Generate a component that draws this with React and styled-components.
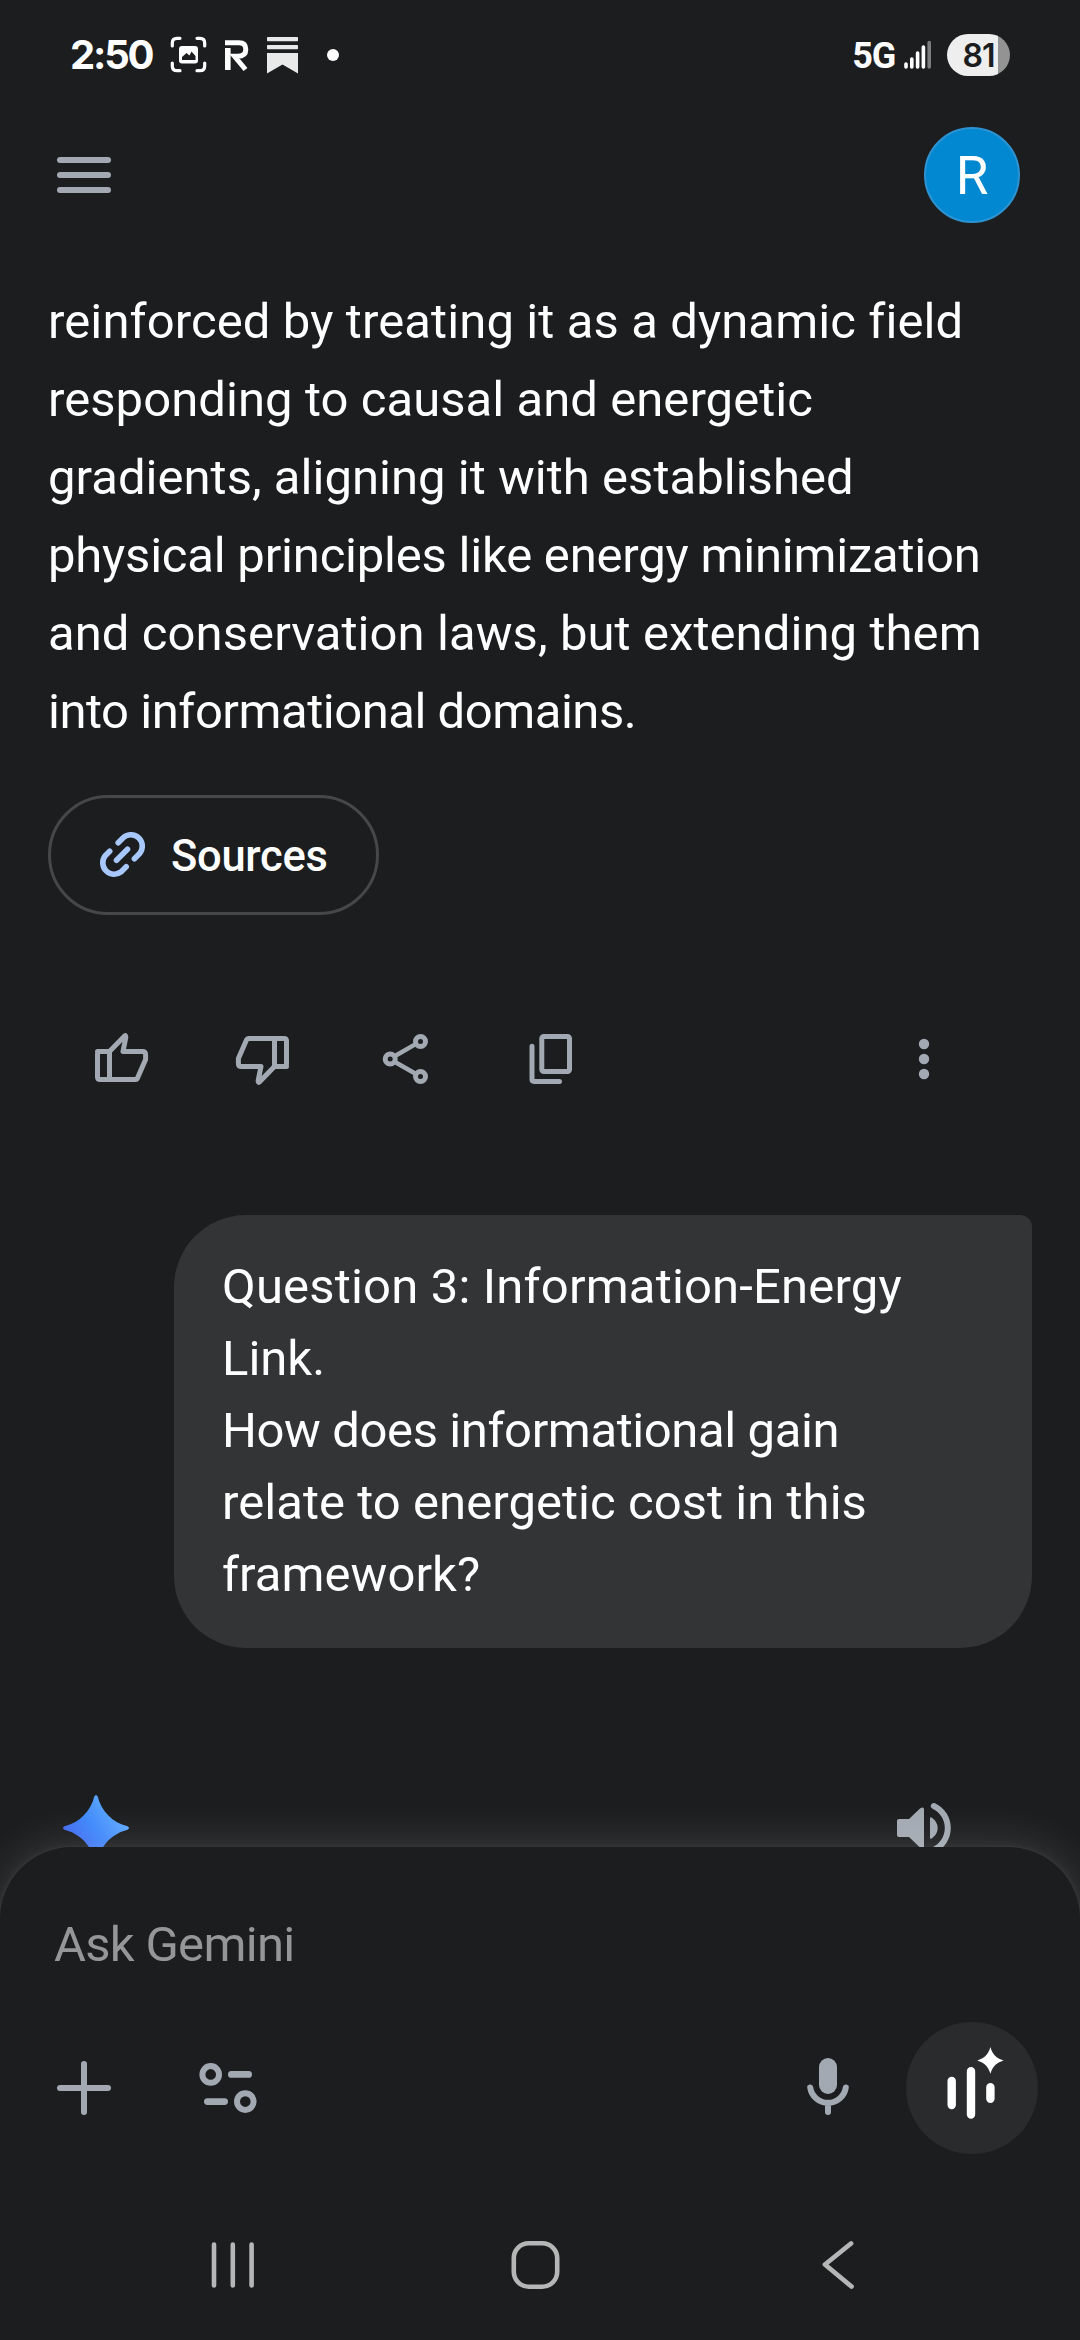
import React from 'react'
import styled, { createGlobalStyle } from 'styled-components'

const GlobalStyle = createGlobalStyle`
  * {
    box-sizing: border-box;
  }
  body {
    margin: 0;
    background: #1b1d1e;
    font-family: Roboto, "Liberation Sans", sans-serif;
  }
  svg {
    display: block;
    flex: none;
  }
`;

const Screen = styled.div`
  width: 1080px;
  height: 2340px;
  display: flex;
  flex-direction: column;
  overflow: hidden;
  background: #1b1d1e;
  color: #ffffff;
`;

const StatusBar = styled.div`
  height: 110px;
  flex: none;
  display: flex;
  justify-content: space-between;
  align-items: center;
  padding: 0 70px;
`;

const StatusGroup = styled.div`
  display: flex;
  align-items: center;
`;

const Clock = styled.span`
  width: 100px;
  font-family: Inter, Roboto, sans-serif;
  font-size: 40px;
  line-height: 48px;
  font-weight: 700;
  letter-spacing: -2.2px;
  white-space: nowrap;
`;

const Network = styled.span`
  margin-right: 9px;
  font-size: 36px;
  line-height: 44px;
  font-weight: 700;
  letter-spacing: -1.2px;
  padding-top: 2px;
`;

const Battery = styled.div`
  width: 63px;
  height: 42px;
  margin-left: 15px;
  border-radius: 21px;
  display: flex;
  align-items: center;
  justify-content: center;
  background: linear-gradient(to right, #eeeeee ${props => props.level}%, #939393 ${props => props.level}%);
  color: #1b1d1e;
  font-family: Inter, Roboto, sans-serif;
  font-size: 32px;
  font-weight: 600;
  letter-spacing: -1px;
`;

const TopBar = styled.div`
  height: 130px;
  flex: none;
  display: flex;
  justify-content: space-between;
  align-items: center;
  padding: 0 60px 0 54px;
`;

const Avatar = styled.div`
  width: 96px;
  height: 96px;
  border-radius: 50%;
  border: 2px solid #2d93d2;
  background: #0288d1;
  display: flex;
  align-items: center;
  justify-content: center;
  font-size: 53px;
  line-height: 60px;
  padding-top: 2px;
`;

const Chat = styled.div`
  height: 1607px;
  flex: none;
  display: flex;
  flex-direction: column;
  align-items: flex-start;
  padding: 43px 48px 0;
  overflow: hidden;
`;

const Paragraph = styled.p`
  margin: 0;
  flex: none;
  font-size: 49px;
  line-height: ${props => props.lh}px;
  white-space: nowrap;
`;

const Line = styled.span`
  display: block;
  letter-spacing: ${props => props.ls}px;
`;

const SourcesButton = styled.button`
  width: 331px;
  height: 120px;
  flex: none;
  margin: 44px 0 0;
  padding: 0 0 0 42px;
  display: flex;
  align-items: center;
  gap: 18px;
  border: 3px solid #474747;
  border-radius: 60px;
  background: transparent;
  color: #ffffff;
  font-family: inherit;
  font-size: 43.5px;
  font-weight: 500;
  letter-spacing: -0.3px;
`;

const SourcesLabel = styled.span`
  padding-top: 2px;
`;

const ActionRow = styled.div`
  align-self: stretch;
  display: flex;
  align-items: center;
  gap: 84px;
  margin-top: 114px;
  padding: 0 78px 0 42px;
`;

const Spacer = styled.div`
  flex: 1;
`;

const Bubble = styled.div`
  align-self: flex-end;
  width: 858px;
  height: 433px;
  flex: none;
  margin-top: 126px;
  padding: 36px 48px 0;
  border-radius: 72px 12px 72px 72px;
  background: #333436;
`;

const ReplyHeader = styled.div`
  align-self: stretch;
  display: flex;
  flex: none;
  align-items: center;
  justify-content: space-between;
  margin-top: 144px;
  padding: 0 78px 0 12px;
`;

const Composer = styled.div`
  position: relative;
  flex: 1;
  display: flex;
  flex-direction: column;
  border-radius: 72px 72px 0 0;
  background: #1b1d1e;
  box-shadow: 0 0 44px 6px rgba(255, 255, 255, 0.13), 0 0 7px rgba(255, 255, 255, 0.08);
`;

const Prompt = styled.div`
  height: 78px;
  margin: 59px 54px 0;
  color: #959697;
  font-size: 49px;
  line-height: 78px;
  letter-spacing: -0.7px;
`;

const Tools = styled.div`
  height: 132px;
  margin-top: 38px;
  padding: 0 42px 0 54px;
  display: flex;
  align-items: center;
`;

const ToolIcon = styled.div`
  margin-left: ${props => props.gap || 0}px;
`;

const LiveButton = styled.div`
  width: 132px;
  height: 132px;
  margin-left: 48px;
  border-radius: 50%;
  background: #2a2b2d;
`;

const NavBar = styled.div`
  height: 60px;
  margin-top: 81px;
  padding: 0 210px 0 203px;
  display: flex;
  align-items: center;
  justify-content: space-between;
`;

const ICON = '#a2a9b2';
const NAV = '#b6b6b6';

const Icon = ({ children, color = ICON, sw = 5, size = 60 }) => (
  <svg width={size} height={size} viewBox={`0 0 ${size} ${size}`} fill="none" stroke={color} strokeWidth={sw}
    strokeLinecap="round" strokeLinejoin="round">
    {children}
  </svg>
)

// the same outline serves thumb up and thumb down
const Thumb = ({ down }) => (
  <Icon>
    <g transform={down ? 'rotate(180 30 30)' : undefined}>
      <path d="M7.5 22.5 H19.5 L34.6 7 Q36 6 35.8 8.6 L33 22.5 H52.5 Q55.6 22.5 55.6 25.6 V30.5 L47.3 49.5 Q46.8 50.6 45.6 50.6 H10 Q7.5 50.6 7.5 48 V25 Q7.5 22.5 10 22.5 M19.5 22.5 V50.6" />
    </g>
  </Icon>
)

const StatusIcons = () => (
  <svg width="180" height="44" viewBox="0 0 180 44" fill="none" stroke="#ffffff">
    {/* screenshot frame */}
    <path d="M2.3 13 V10 Q2.3 5.3 7 5.3 H10 M27 5.3 H30 Q34.7 5.3 34.7 10 V13 M34.7 30 V33 Q34.7 37.7 30 37.7 H27 M10 37.7 H7 Q2.3 37.7 2.3 33 V30"
      strokeWidth="3.2" strokeLinecap="round" />
    <rect x="9" y="13" width="19" height="17.5" rx="3" fill="#ffffff" stroke="none" />
    <path d="M12 27 V24 L16.5 20 L19.5 22.5 L21.5 18.5 L25.5 23 V27 Z" fill="#1b1d1e" stroke="none" />
    {/* app badge */}
    <path d="M55 9.8 H69 Q75.8 9.8 75.8 16.5 Q75.8 23.3 67.5 23.3 H64.5 L75.5 36.5" strokeWidth="5" />
    <path d="M57.8 15 V37" strokeWidth="5.6" />
    {/* bookmark */}
    <g fill="#e9e9e9" stroke="none">
      <rect x="97" y="4" width="31" height="4.2" rx="0.8" />
      <rect x="97" y="12" width="31" height="4.2" rx="0.8" />
      <path d="M97 20 H128 V40.5 L112.5 31.5 L97 40.5 Z" />
    </g>
    <circle cx="163" cy="22" r="6" fill="#ffffff" stroke="none" />
  </svg>
)

const Signal = () => (
  <svg width="28" height="30" viewBox="0 0 28 30" strokeWidth="3.6" strokeLinecap="round" stroke="#ffffff">
    <path d="M2 24 V27 M7.8 19 V27 M13.6 13 V27 M19.4 7 V27" />
    <path d="M25.2 2.5 V27" stroke="#7c7d7e" />
  </svg>
)

const App = () => {
  return (
    <Screen>
      <GlobalStyle />
      <StatusBar>
        <StatusGroup>
          <Clock>2:50</Clock>
          <StatusIcons />
        </StatusGroup>
        <StatusGroup>
          <Network>5G</Network>
          <Signal />
          <Battery level={81}>81</Battery>
        </StatusGroup>
      </StatusBar>

      <TopBar>
        <Icon sw={6}>
          <path d="M6 15 H54 M6 30 H54 M6 45 H54" />
        </Icon>
        <Avatar>R</Avatar>
      </TopBar>

      <Chat>
        <Paragraph lh={78}>
          <Line ls={0.11}>reinforced by treating it as a dynamic field</Line>
          <Line ls={0.06}>responding to causal and energetic</Line>
          <Line ls={0.03}>gradients, aligning it with established</Line>
          <Line ls={-0.21}>physical principles like energy minimization</Line>
          <Line ls={0.08}>and conservation laws, but extending them</Line>
          <Line ls={-0.47}>into informational domains.</Line>
        </Paragraph>

        <SourcesButton>
          <Icon color="#a8c7fa" sw={5.6}>
            <path d="M25.5 20 L30.5 15 A11.4 11.4 0 0 1 46.7 31 L41.7 36 M34.8 26.5 L23.8 37.5 M17 28.5 L12.5 33 A11.4 11.4 0 0 0 28.5 49 L33.5 44"
              transform="translate(-0.3 -2.2)" />
          </Icon>
          <SourcesLabel>Sources</SourcesLabel>
        </SourcesButton>

        <ActionRow>
          <Thumb />
          <Thumb down />
          <Icon>
            <path d="M17 27 L38 14.8 M17 33 L38 45" strokeWidth="4.4" />
            <circle cx="12.2" cy="30" r="5" />
            <circle cx="42.5" cy="12.5" r="5" />
            <circle cx="42.5" cy="47.5" r="5" />
          </Icon>
          <Icon>
            <rect x="19.8" y="7.5" width="27.7" height="35" rx="2" />
            <path d="M10 17.2 V50.5 Q10 52.4 12 52.4 H37.5" />
          </Icon>
          <Spacer />
          <Icon>
            <g fill={ICON} stroke="none">
              <circle cx="30" cy="15" r="5.2" />
              <circle cx="30" cy="30" r="5.2" />
              <circle cx="30" cy="45" r="5.2" />
            </g>
          </Icon>
        </ActionRow>

        <Bubble>
          <Paragraph lh={72}>
            <Line ls={0.18}>Question 3: Information-Energy</Line>
            <Line ls={0}>Link.</Line>
            <Line ls={-0.4}>How does informational gain</Line>
            <Line ls={0.05}>relate to energetic cost in this</Line>
            <Line ls={0.05}>framework?</Line>
          </Paragraph>
        </Bubble>

        <ReplyHeader>
          <svg width="72" height="72" viewBox="0 0 72 72">
            <defs>
              <linearGradient id="spark" x1="0.15" y1="0.75" x2="0.75" y2="0.25">
                <stop offset="0" stopColor="#4267ee" />
                <stop offset="0.5" stopColor="#3f87fb" />
                <stop offset="1" stopColor="#5ba6ff" />
              </linearGradient>
            </defs>
            <path fill="url(#spark)"
              d="M34.3 4.5 Q36 1.5 37.7 4.5 C41.5 19.5 52.5 30.5 67.5 34.3 Q70.5 36 67.5 37.7 C52.5 41.5 41.5 52.5 37.7 67.5 Q36 70.5 34.3 67.5 C30.5 52.5 19.5 41.5 4.5 37.7 Q1.5 36 4.5 34.3 C19.5 30.5 30.5 19.5 34.3 4.5 Z" />
          </svg>
          <Icon sw={6}>
            <g fill={ICON} stroke="none">
              <path d="M5 21 H15 L26 10.5 Q30 8 30 11.5 V48.5 Q30 52 26 49.5 L15 39 H5 Q3 39 3 37 V23 Q3 21 5 21 Z" />
              <path d="M36 20.5 Q36 18.3 38 19.8 Q43.7 24 43.7 30 Q43.7 36 38 40.2 Q36 41.7 36 39.5 Z" />
            </g>
            <path d="M39.8 8 A24.3 24.3 0 0 1 39.8 52" />
          </Icon>
        </ReplyHeader>
      </Chat>

      <Composer>
        <Prompt>Ask Gemini</Prompt>
        <Tools>
          <Icon sw={6}>
            <path d="M30 6 V54 M6 30 H54" />
          </Icon>
          <ToolIcon gap={84}>
            <Icon sw={6}>
              <circle cx="12.7" cy="16.4" r="8.3" />
              <circle cx="47.3" cy="43.6" r="8.3" />
              <path d="M33.4 16.4 H50.6 M9.4 43.6 H26.6" strokeWidth="6.8" />
            </Icon>
          </ToolIcon>
          <Spacer />
          <ToolIcon>
            <Icon sw={6}>
              <rect x="21" y="0" width="18" height="36" rx="9" fill={ICON} stroke="none" />
              <path d="M12.2 29.5 A18 18 0 0 0 47.8 29.5 M30 45 V54" />
            </Icon>
          </ToolIcon>
          <LiveButton>
            <Icon size={132} color="#ffffff" sw={8.4}>
              <path d="M45.7 59 V83 M65 49.2 V92.5 M84.4 65.3 V76.7" />
              <path fill="#ffffff" stroke="none"
                d="M84.4 25 C86.6 32.5 90.3 36.2 97.6 38.4 C90.3 40.6 86.6 44.3 84.4 51.8 C82.2 44.3 78.5 40.6 71.2 38.4 C78.5 36.2 82.2 32.5 84.4 25 Z" />
            </Icon>
          </LiveButton>
        </Tools>
        <NavBar>
          <Icon color={NAV} sw={4.6}>
            <path d="M11 9.5 V50.5 M29.8 9.5 V50.5 M48.6 9.5 V50.5" />
          </Icon>
          <Icon color={NAV} sw={4.6}>
            <rect x="6.8" y="8.3" width="43.4" height="43.4" rx="15" />
          </Icon>
          <Icon color={NAV} sw={4.8}>
            <path d="M41 8.5 L15 29.5 L41.5 51.5" />
          </Icon>
        </NavBar>
      </Composer>
    </Screen>
  )
}

export default App
